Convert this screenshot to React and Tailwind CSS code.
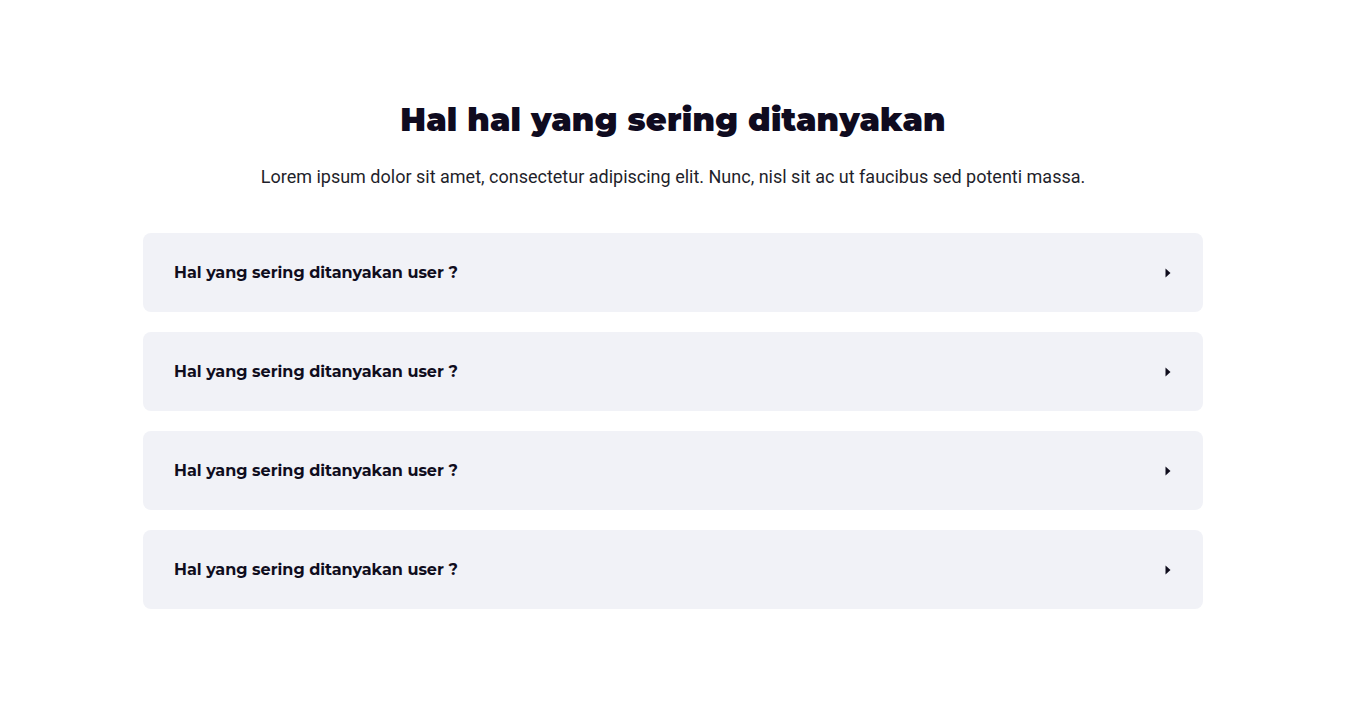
import { Fragment } from 'react';

const faqs = [
  'Hal yang sering ditanyakan user ?',
  'Hal yang sering ditanyakan user ?',
  'Hal yang sering ditanyakan user ?',
  'Hal yang sering ditanyakan user ?',
];

function Caret() {
  return (
    <svg width="6" height="10" viewBox="0 0 6 10" className="shrink-0">
      <path d="M0.5 0.5 L5.5 5 L0.5 9.5 Z" fill="#0f0d1d" />
    </svg>
  );
}

export default function App() {
  return (
    <div className="min-h-screen bg-white pt-[100px] pb-[100px]">
      <div className="mx-auto w-[1060px] flex flex-col items-center">
        <h1 className="text-[32px] leading-[40px] font-black text-[#0f0b1f] tracking-[0.2px] font-['Montserrat','Inter',sans-serif]">
          Hal hal yang sering ditanyakan
        </h1>
        <p className="mt-[25px] text-[18px] leading-[24px] text-[#1f1f2b] font-['Roboto',sans-serif]">
          Lorem ipsum dolor sit amet, consectetur adipiscing elit. Nunc, nisl sit ac ut faucibus sed potenti massa.
        </p>

        <div className="mt-[44px] w-full flex flex-col gap-[20px]">
          {faqs.map((q, i) => (
            <Fragment key={i}>
              <div className="h-[79px] rounded-[8px] bg-[#f1f2f7] flex items-center justify-between pl-[31px] pr-[32px]">
                <span className="text-[16px] font-bold text-[#0f0d1d] font-['Montserrat','Inter',sans-serif]">
                  {q}
                </span>
                <Caret />
              </div>
            </Fragment>
          ))}
        </div>
      </div>
    </div>
  );
}
